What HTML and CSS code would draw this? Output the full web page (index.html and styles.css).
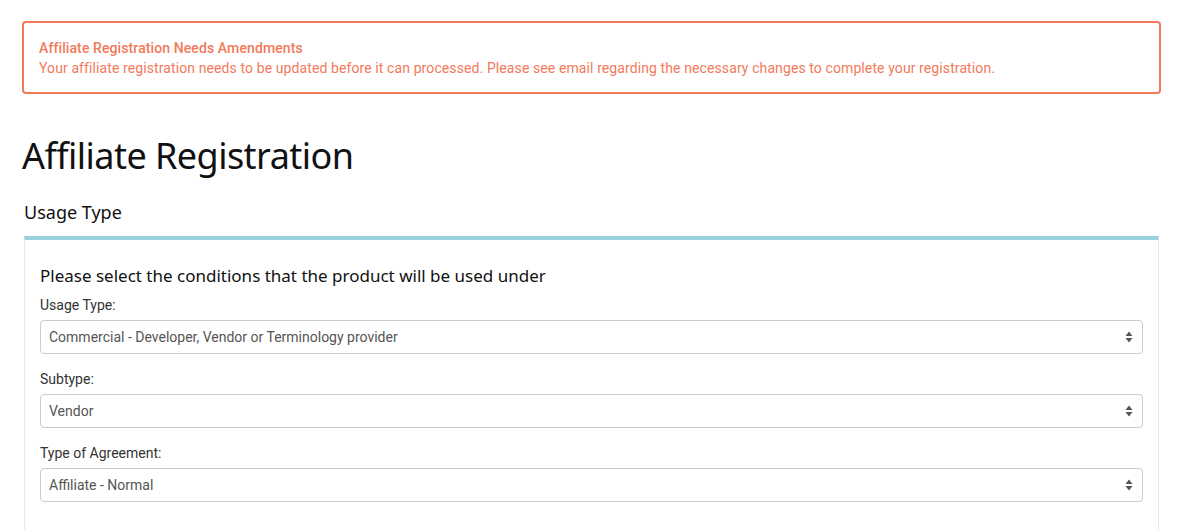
FILE: index.html
```html
<!DOCTYPE html>
<html>
<head>
<meta charset="utf-8">
<link rel="stylesheet" href="styles.css">
</head>
<body>
<div class="page">
  <div class="alert">
    <div class="alert-title">Affiliate Registration Needs Amendments</div>
    <div class="alert-text">Your affiliate registration needs to be updated before it can processed. Please see email regarding the necessary changes to complete your registration.</div>
  </div>
  <h1 class="page-title">Affiliate Registration</h1>
  <h3 class="section-title">Usage Type</h3>
  <div class="panel">
    <h4 class="panel-heading">Please select the conditions that the product will be used under</h4>
    <div class="field">
      <label class="label">Usage Type:</label>
      <div class="select">
        <span>Commercial - Developer, Vendor or Terminology provider</span>
        <svg class="arrows" width="8" height="12" viewBox="0 0 8 12"><path d="M4 0.5 L7.5 5 L0.5 5 Z M0.5 7 L7.5 7 L4 11.5 Z" fill="#555"/></svg>
      </div>
    </div>
    <div class="field">
      <label class="label">Subtype:</label>
      <div class="select">
        <span>Vendor</span>
        <svg class="arrows" width="8" height="12" viewBox="0 0 8 12"><path d="M4 0.5 L7.5 5 L0.5 5 Z M0.5 7 L7.5 7 L4 11.5 Z" fill="#555"/></svg>
      </div>
    </div>
    <div class="field">
      <label class="label">Type of Agreement:</label>
      <div class="select">
        <span>Affiliate - Normal</span>
        <svg class="arrows" width="8" height="12" viewBox="0 0 8 12"><path d="M4 0.5 L7.5 5 L0.5 5 Z M0.5 7 L7.5 7 L4 11.5 Z" fill="#555"/></svg>
      </div>
    </div>
  </div>
</div>
</body>
</html>
```

FILE: styles.css
```css
html, body {
  margin: 0;
  padding: 0;
  background: #fff;
}
body {
  font-family: Roboto, "Liberation Sans", sans-serif;
  color: #333;
}
.page {
  padding: 21px 34px 0 22px;
}
.alert {
  border: 2px solid #f27a5b;
  border-radius: 4px;
  padding: 15px 15px 14px 15px;
  color: #f27a5b;
  font-size: 14px;
  line-height: 20px;
  letter-spacing: 0.1px;
}
.alert-title {
  font-weight: 500;
}
.page-title {
  font-family: "Noto Sans", "Open Sans", sans-serif;
  font-weight: 400;
  font-size: 36px;
  line-height: 44px;
  margin: 40px 0 0 0;
  color: #111;
  letter-spacing: -0.55px;
}
.section-title {
  font-family: "Noto Sans", "Open Sans", sans-serif;
  font-weight: 400;
  font-size: 18px;
  line-height: 24px;
  margin: 22px 0 0 2px;
  color: #111;
}
.panel {
  margin: 12px 2px 0 2px;
  border-top: 4px solid #9bd0de;
  border-left: 1px solid #e8e8e8;
  border-right: 1px solid #e8e8e8;
  padding: 24px 15px 30px 15px;
}
.panel-heading {
  font-family: "Noto Sans", "Open Sans", sans-serif;
  font-weight: 400;
  font-size: 17px;
  line-height: 24px;
  margin: 0 0 7px 0;
  color: #111;
}
.field {
  display: flex;
  flex-direction: column;
  margin-bottom: 15px;
}
.label {
  font-size: 14px;
  line-height: 20px;
  margin-bottom: 5px;
  color: #333;
}
.select {
  height: 34px;
  box-sizing: border-box;
  border: 1px solid #ccc;
  border-radius: 4px;
  padding: 0 9px 0 8px;
  display: flex;
  align-items: center;
  justify-content: space-between;
  font-size: 14px;
  color: #555;
}
.arrows {
  display: block;
}
```
